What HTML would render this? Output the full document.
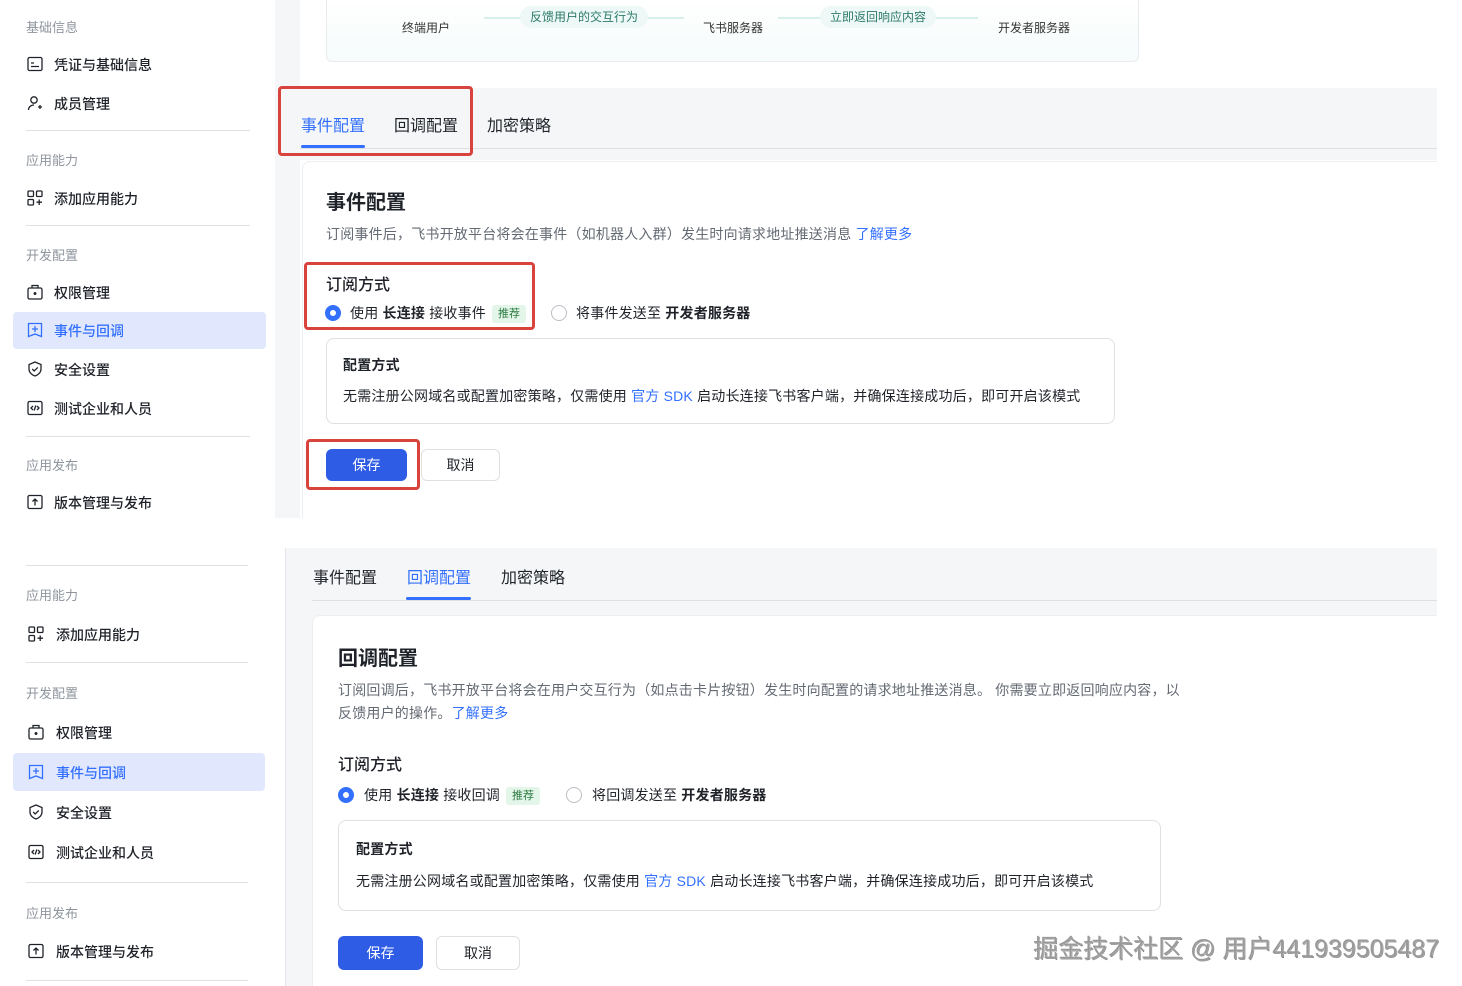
<!DOCTYPE html>
<html><head><meta charset="utf-8"><style>
*{margin:0;padding:0;box-sizing:border-box}
body{width:1462px;height:986px;background:#fff;position:relative;overflow:hidden;font-family:"Liberation Sans","Noto Sans CJK SC",sans-serif;color:#1f2329}
.a{position:absolute;white-space:nowrap}
.grp{font-size:13px;color:#8f959e}
.it{font-size:14px;color:#1f2329;font-weight:500}
.ln{position:absolute;height:1px;background:#dee0e3}
.ic{position:absolute;width:16px;height:16px}
.blue{color:#3370ff}
.red{position:absolute;border:3px solid #d9433d;border-radius:4px}
.tab{font-size:16px;position:absolute;white-space:nowrap}
.btn{position:absolute;border-radius:6px;font-size:14px;text-align:center}
.radio{position:absolute;width:16px;height:16px;border-radius:50%}
.tag{display:inline-block;background:#e4f5e9;color:#2a7a3f;font-size:11px;padding:0 6px;line-height:18px;border-radius:3px;margin-left:6px;vertical-align:1px;letter-spacing:0}
.box{position:absolute;border:1px solid #dee0e3;border-radius:8px;background:#fff}
.t{font-size:14px;letter-spacing:0.2px}
</style></head><body>

<!-- TOP PANEL -->
<div class="a" style="left:275px;top:0;width:25px;height:518px;background:#f5f6f7"></div>
<div class="a" style="left:275px;top:88px;width:1162px;height:72px;background:#f5f6f7"></div>
<div class="a" style="left:300px;top:148px;width:1137px;height:1px;background:#dee0e3"></div>
<div class="a" style="left:326px;top:0;width:813px;height:62px;border:1px solid #e8ecef;border-top:none;border-radius:0 0 6px 6px;background:linear-gradient(#fff,#f6fbfb)"></div>
<div class="a" style="left:402px;top:19px;font-size:12px;color:#333">终端用户</div>
<div class="a" style="left:484px;top:17px;width:200px;height:2px;background:#d7f0ec"></div>
<div class="a" style="left:520px;top:6px;padding:0 10px;line-height:22px;background:#eef8f6;border-radius:11px;font-size:12px;color:#2d7a6a">反馈用户的交互行为</div>
<div class="a" style="left:703px;top:19px;font-size:12px;color:#333">飞书服务器</div>
<div class="a" style="left:778px;top:17px;width:200px;height:2px;background:#d7f0ec"></div>
<div class="a" style="left:820px;top:6px;padding:0 10px;line-height:22px;background:#eef8f6;border-radius:11px;font-size:12px;color:#2d7a6a">立即返回响应内容</div>
<div class="a" style="left:998px;top:19px;font-size:12px;color:#333">开发者服务器</div>

<div class="tab blue" style="left:301px;top:112px">事件配置</div>
<div class="a" style="left:301px;top:145px;width:64px;height:3px;background:#3370ff;border-radius:2px"></div>
<div class="tab" style="left:394px;top:112px">回调配置</div>
<div class="tab" style="left:487px;top:112px">加密策略</div>
<div class="red" style="left:278px;top:86px;width:195px;height:70px"></div>

<div class="a" style="left:302px;top:161px;width:1135px;height:357px;border-top:1px solid #eceef0;border-left:1px solid #eceef0;border-radius:8px 0 0 0"></div>
<div class="a" style="left:326px;top:186px;font-size:20px;font-weight:700">事件配置</div>
<div class="a t" style="left:326px;top:224px;color:#646a73">订阅事件后，飞书开放平台将会在事件（如机器人入群）发生时向请求地址推送消息 <span class="blue">了解更多</span></div>
<div class="a" style="left:326px;top:271px;font-size:16px;font-weight:500">订阅方式</div>
<div class="radio" style="left:325px;top:305px;border:5px solid #3370ff"></div>
<div class="a t" style="left:350px;top:303px">使用 <b>长连接</b> 接收事件<span class="tag">推荐</span></div>
<div class="radio" style="left:551px;top:305px;border:1px solid #bbbfc4"></div>
<div class="a t" style="left:576px;top:303px">将事件发送至 <b>开发者服务器</b></div>
<div class="red" style="left:304px;top:262px;width:231px;height:68px"></div>
<div class="box" style="left:326px;top:338px;width:789px;height:86px"></div>
<div class="a t" style="left:343px;top:355px;font-weight:600">配置方式</div>
<div class="a t" style="left:343px;top:386px">无需注册公网域名或配置加密策略，仅需使用 <span class="blue">官方 SDK</span> 启动长连接飞书客户端，并确保连接成功后，即可开启该模式</div>
<div class="btn" style="left:326px;top:449px;width:81px;height:32px;background:#2f5ce5;color:#fff;line-height:32px">保存</div>
<div class="btn" style="left:421px;top:449px;width:79px;height:32px;border:1px solid #dee0e3;line-height:30px">取消</div>
<div class="red" style="left:306px;top:439px;width:114px;height:51px"></div>

<!-- top sidebar -->
<div class="a grp" style="left:26px;top:17px">基础信息</div>
<svg class="ic" style="left:27px;top:56px" viewBox="0 0 16 16" fill="none" stroke="#1f2329" stroke-width="1.3"><rect x="1" y="1.5" width="14" height="13" rx="1.5"/><path d="M4 7h3M4 10.5h8"/></svg>
<div class="a it" style="left:54px;top:55px">凭证与基础信息</div>
<svg class="ic" style="left:27px;top:95px" viewBox="0 0 16 16" fill="none" stroke="#1f2329" stroke-width="1.3"><circle cx="7" cy="5" r="3.2"/><path d="M1.5 15c0-3 2.5-5 5.5-5M11 12h4M13 10v4"/></svg>
<div class="a it" style="left:54px;top:94px">成员管理</div>
<div class="ln" style="left:26px;top:130px;width:224px"></div>
<div class="a grp" style="left:26px;top:150px">应用能力</div>
<svg class="ic" style="left:27px;top:190px" viewBox="0 0 16 16" fill="none" stroke="#1f2329" stroke-width="1.3"><rect x="1" y="1" width="5.5" height="5.5" rx="1"/><rect x="9.5" y="1" width="5.5" height="5.5" rx="1"/><rect x="1" y="9.5" width="5.5" height="5.5" rx="1"/><path d="M9.5 12.2h5.5M12.2 9.5v5.5"/></svg>
<div class="a it" style="left:54px;top:189px">添加应用能力</div>
<div class="ln" style="left:26px;top:225px;width:224px"></div>
<div class="a grp" style="left:26px;top:245px">开发配置</div>
<svg class="ic" style="left:27px;top:284px" viewBox="0 0 16 16" fill="none" stroke="#1f2329" stroke-width="1.3"><rect x="1" y="4" width="14" height="11" rx="1.5"/><path d="M5 4V1.5h6V4"/><circle cx="8" cy="9.5" r=".8" fill="#1f2329"/></svg>
<div class="a it" style="left:54px;top:283px">权限管理</div>
<div class="a" style="left:13px;top:312px;width:253px;height:37px;background:#e1e8fd;border-radius:4px"></div>
<svg class="ic" style="left:27px;top:322px" viewBox="0 0 16 16" fill="none" stroke="#3370ff" stroke-width="1.3"><path d="M1.5 1.5h13v13L8 12l-6.5 2.5z"/><path d="M5 7h6M8 4v6"/></svg>
<div class="a it blue" style="left:54px;top:321px">事件与回调</div>
<svg class="ic" style="left:27px;top:361px" viewBox="0 0 16 16" fill="none" stroke="#1f2329" stroke-width="1.3"><path d="M8 1l6 2.5V8c0 3.5-3 6-6 7-3-1-6-3.5-6-7V3.5z"/><path d="M5.2 8l2 2 3.6-3.6"/></svg>
<div class="a it" style="left:54px;top:360px">安全设置</div>
<svg class="ic" style="left:27px;top:400px" viewBox="0 0 16 16" fill="none" stroke="#1f2329" stroke-width="1.3"><rect x="1" y="1.5" width="14" height="13" rx="1.5"/><path d="M6 6l-2 2 2 2M10 6l2 2-2 2M8.8 5.5l-1.6 5"/></svg>
<div class="a it" style="left:54px;top:399px">测试企业和人员</div>
<div class="ln" style="left:26px;top:436px;width:224px"></div>
<div class="a grp" style="left:26px;top:455px">应用发布</div>
<svg class="ic" style="left:27px;top:494px" viewBox="0 0 16 16" fill="none" stroke="#1f2329" stroke-width="1.3"><rect x="1" y="1.5" width="14" height="13" rx="1.5"/><path d="M8 11.5V5M5.5 7.5L8 5l2.5 2.5"/></svg>
<div class="a it" style="left:54px;top:493px">版本管理与发布</div>

<!-- BOTTOM PANEL -->
<div class="a" style="left:285px;top:548px;width:1152px;height:438px;background:#f5f6f7;border-left:1px solid #e4e6e9"></div>
<div class="a" style="left:312px;top:600px;width:1125px;height:1px;background:#dee0e3"></div>
<div class="tab" style="left:313px;top:564px">事件配置</div>
<div class="tab blue" style="left:407px;top:564px">回调配置</div>
<div class="a" style="left:406px;top:597px;width:65px;height:3px;background:#3370ff;border-radius:2px"></div>
<div class="tab" style="left:501px;top:564px">加密策略</div>
<div class="a" style="left:312px;top:615px;width:1125px;height:371px;background:#fff;border-radius:8px 0 0 0;border-top:1px solid #eceef0;border-left:1px solid #eceef0"></div>
<div class="a" style="left:338px;top:642px;font-size:20px;font-weight:700">回调配置</div>
<div class="a t" style="left:338px;top:680px;color:#646a73">订阅回调后，飞书开放平台将会在用户交互行为（如点击卡片按钮）发生时向配置的请求地址推送消息。 你需要立即返回响应内容，以</div>
<div class="a t" style="left:338px;top:703px;color:#646a73">反馈用户的操作。<span class="blue">了解更多</span></div>
<div class="a" style="left:338px;top:751px;font-size:16px;font-weight:500">订阅方式</div>
<div class="radio" style="left:338px;top:787px;border:5px solid #3370ff"></div>
<div class="a t" style="left:364px;top:785px">使用 <b>长连接</b> 接收回调<span class="tag">推荐</span></div>
<div class="radio" style="left:566px;top:787px;border:1px solid #bbbfc4"></div>
<div class="a t" style="left:592px;top:785px">将回调发送至 <b>开发者服务器</b></div>
<div class="box" style="left:338px;top:820px;width:823px;height:91px"></div>
<div class="a t" style="left:356px;top:839px;font-weight:600">配置方式</div>
<div class="a t" style="left:356px;top:871px">无需注册公网域名或配置加密策略，仅需使用 <span class="blue">官方 SDK</span> 启动长连接飞书客户端，并确保连接成功后，即可开启该模式</div>
<div class="btn" style="left:338px;top:936px;width:85px;height:34px;background:#2f5ce5;color:#fff;line-height:34px">保存</div>
<div class="btn" style="left:436px;top:936px;width:84px;height:34px;border:1px solid #dee0e3;line-height:32px">取消</div>
<div class="a" style="left:1033px;top:929px;font-size:25px;color:#9a9a9a;text-shadow:0 0 2px #fff,1px 1px 0 #777">掘金技术社区 @ 用户441939505487</div>

<!-- bottom sidebar -->
<div class="ln" style="left:26px;top:565px;width:222px"></div>
<div class="a grp" style="left:26px;top:585px">应用能力</div>
<svg class="ic" style="left:28px;top:626px" viewBox="0 0 16 16" fill="none" stroke="#1f2329" stroke-width="1.3"><rect x="1" y="1" width="5.5" height="5.5" rx="1"/><rect x="9.5" y="1" width="5.5" height="5.5" rx="1"/><rect x="1" y="9.5" width="5.5" height="5.5" rx="1"/><path d="M9.5 12.2h5.5M12.2 9.5v5.5"/></svg>
<div class="a it" style="left:56px;top:625px">添加应用能力</div>
<div class="ln" style="left:26px;top:662px;width:222px"></div>
<div class="a grp" style="left:26px;top:683px">开发配置</div>
<svg class="ic" style="left:28px;top:724px" viewBox="0 0 16 16" fill="none" stroke="#1f2329" stroke-width="1.3"><rect x="1" y="4" width="14" height="11" rx="1.5"/><path d="M5 4V1.5h6V4"/><circle cx="8" cy="9.5" r=".8" fill="#1f2329"/></svg>
<div class="a it" style="left:56px;top:723px">权限管理</div>
<div class="a" style="left:13px;top:753px;width:252px;height:38px;background:#e1e8fd;border-radius:4px"></div>
<svg class="ic" style="left:28px;top:764px" viewBox="0 0 16 16" fill="none" stroke="#3370ff" stroke-width="1.3"><path d="M1.5 1.5h13v13L8 12l-6.5 2.5z"/><path d="M5 7h6M8 4v6"/></svg>
<div class="a it blue" style="left:56px;top:763px">事件与回调</div>
<svg class="ic" style="left:28px;top:804px" viewBox="0 0 16 16" fill="none" stroke="#1f2329" stroke-width="1.3"><path d="M8 1l6 2.5V8c0 3.5-3 6-6 7-3-1-6-3.5-6-7V3.5z"/><path d="M5.2 8l2 2 3.6-3.6"/></svg>
<div class="a it" style="left:56px;top:803px">安全设置</div>
<svg class="ic" style="left:28px;top:844px" viewBox="0 0 16 16" fill="none" stroke="#1f2329" stroke-width="1.3"><rect x="1" y="1.5" width="14" height="13" rx="1.5"/><path d="M6 6l-2 2 2 2M10 6l2 2-2 2M8.8 5.5l-1.6 5"/></svg>
<div class="a it" style="left:56px;top:843px">测试企业和人员</div>
<div class="ln" style="left:26px;top:882px;width:222px"></div>
<div class="a grp" style="left:26px;top:903px">应用发布</div>
<svg class="ic" style="left:28px;top:943px" viewBox="0 0 16 16" fill="none" stroke="#1f2329" stroke-width="1.3"><rect x="1" y="1.5" width="14" height="13" rx="1.5"/><path d="M8 11.5V5M5.5 7.5L8 5l2.5 2.5"/></svg>
<div class="a it" style="left:56px;top:942px">版本管理与发布</div>
<div class="ln" style="left:26px;top:980px;width:222px"></div>
</body></html>
